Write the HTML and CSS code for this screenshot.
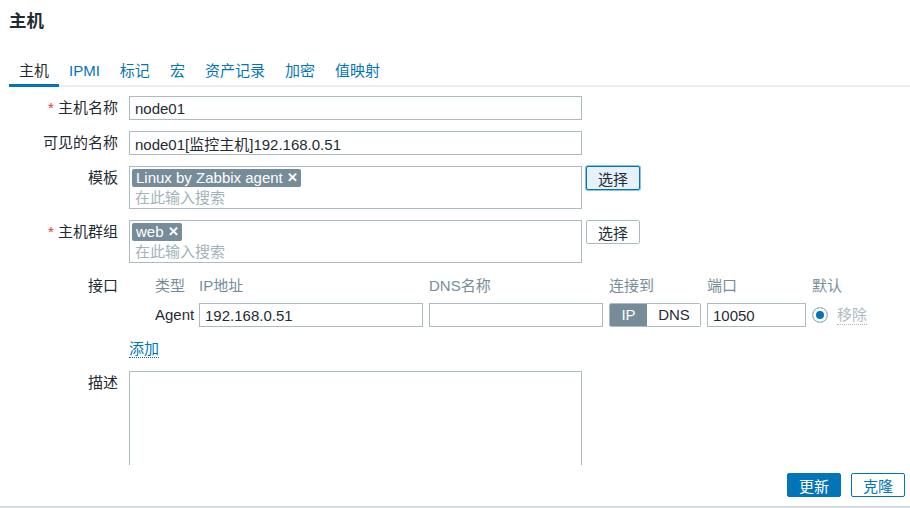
FILE: index.html
```html
<!DOCTYPE html>
<html lang="zh">
<head>
<meta charset="utf-8">
<title>主机</title>
<link rel="stylesheet" href="styles.css">
</head>
<body>
<div class="page">
  <header class="page-header">
    <h1 class="title">主机</h1>
  </header>
  <nav class="tabs">
    <a class="tab active">主机</a>
    <a class="tab">IPMI</a>
    <a class="tab">标记</a>
    <a class="tab">宏</a>
    <a class="tab">资产记录</a>
    <a class="tab">加密</a>
    <a class="tab">值映射</a>
  </nav>
  <main class="content">
    <div class="form-grid">
      <label class="lbl"><span class="req">*</span> 主机名称</label>
      <div class="field"><input class="text-input wide" type="text" value="node01"></div>

      <label class="lbl">可见的名称</label>
      <div class="field"><input class="text-input wide" type="text" value="node01[监控主机]192.168.0.51"></div>

      <label class="lbl">模板</label>
      <div class="field row">
        <div class="multiselect">
          <div class="tags"><span class="tag">Linux by Zabbix agent<span class="tag-x">✕</span></span></div>
          <div class="ms-placeholder">在此输入搜索</div>
        </div>
        <button class="btn-grey focused">选择</button>
      </div>

      <label class="lbl"><span class="req">*</span> 主机群组</label>
      <div class="field row">
        <div class="multiselect">
          <div class="tags"><span class="tag">web<span class="tag-x">✕</span></span></div>
          <div class="ms-placeholder">在此输入搜索</div>
        </div>
        <button class="btn-grey">选择</button>
      </div>

      <label class="lbl">接口</label>
      <div class="field">
        <div class="iface">
          <div class="ih">类型</div>
          <div class="ih">IP地址</div>
          <div class="ih">DNS名称</div>
          <div class="ih">连接到</div>
          <div class="ih">端口</div>
          <div class="ih">默认</div>

          <div class="itype">Agent</div>
          <input class="text-input" type="text" value="192.168.0.51">
          <input class="text-input" type="text" value="">
          <div class="toggle"><span class="seg on">IP</span><span class="seg">DNS</span></div>
          <input class="text-input" type="text" value="10050">
          <div class="def"><span class="radio"></span><span class="remove">移除</span></div>
        </div>
      </div>

      <div class="lbl empty"></div>
      <div class="field add-row"><a class="link">添加</a></div>

      <label class="lbl">描述</label>
      <div class="field"><textarea class="textarea"></textarea></div>
    </div>
  </main>
  <footer class="footer">
    <button class="btn-primary">更新</button>
    <button class="btn-alt">克隆</button>
  </footer>
</div>
</body>
</html>
```

FILE: styles.css
```css
* { box-sizing: border-box; }

html, body {
  margin: 0;
  padding: 0;
  background: #ffffff;
}

body {
  font-family: "Liberation Sans", Arial, "Noto Sans CJK SC", sans-serif;
  font-size: 15px;
  color: #1f2c33;
}

.page {
  height: 508px;
  display: flex;
  flex-direction: column;
  overflow: hidden;
  border-bottom: 2px solid #d5dce0;
}

.page-header {
  padding: 10px 9px 0;
}

.title {
  margin: 0;
  font-size: 17.5px;
  line-height: 22px;
  font-weight: bold;
  color: #1f2c33;
}

.tabs {
  display: flex;
  margin: 24px 0 0 9px;
  border-bottom: 2px solid #ebeef0;
}

.tab {
  display: block;
  padding: 5px 10px 3px;
  line-height: 20px;
  color: #0275b8;
  border-bottom: 3px solid transparent;
  margin-bottom: -2px;
  cursor: pointer;
}

.tab.active {
  color: #1f2c33;
  border-bottom-color: #0275b8;
}

.content {
  flex: 0 0 378px;
  height: 378px;
  overflow: hidden;
  padding-top: 9px;
}

.form-grid {
  display: grid;
  grid-template-columns: 118px 1fr;
  column-gap: 11px;
  row-gap: 11px;
  align-items: start;
}

.lbl {
  text-align: right;
  line-height: 24px;
  white-space: nowrap;
}

.req {
  color: #e33734;
}

.field.row {
  display: flex;
  align-items: flex-start;
  gap: 4px;
}

.text-input {
  font: inherit;
  color: #1f2c33;
  height: 24px;
  border: 1px solid #acbbc2;
  border-radius: 0;
  padding: 0 5px;
  margin: 0;
  background: #fff;
  outline: none;
  width: 100%;
}

.text-input.wide {
  width: 453px;
}

.multiselect {
  width: 453px;
  height: 43px;
  border: 1px solid #acbbc2;
  padding: 2px 2px 1px;
  background: #fff;
}

.tags {
  display: flex;
  height: 18px;
  margin-bottom: 2px;
}

.tag {
  display: inline-flex;
  align-items: center;
  height: 18px;
  line-height: 18px;
  background: #768d99;
  color: #ffffff;
  border-radius: 2px;
  padding: 0 3px 0 4px;
  white-space: nowrap;
}

.tag-x {
  font-size: 13px;
  font-weight: bold;
  margin-left: 4px;
}

.ms-placeholder {
  line-height: 18px;
  height: 18px;
  padding-left: 3px;
  color: #a4b2b9;
}

.btn-grey {
  font: inherit;
  height: 24px;
  width: 54px;
  padding: 0;
  background: #ffffff;
  color: #1f2c33;
  border: 1px solid #acbbc2;
  border-radius: 2px;
  cursor: pointer;
}

.btn-grey.focused {
  background: #e6f1fb;
  border-color: #0275b8;
  box-shadow: 0 0 0 1px rgba(2, 117, 184, 0.45);
}

.iface {
  display: grid;
  grid-template-columns: 38px 224px 174px 92px 99px auto;
  column-gap: 6px;
  row-gap: 5px;
  padding-left: 26px;
  align-items: center;
}

.ih {
  line-height: 24px;
  color: #768d99;
  white-space: nowrap;
}

.itype {
  line-height: 24px;
  white-space: nowrap;
}

.toggle {
  display: flex;
  height: 24px;
  border: 1px solid #acbbc2;
  border-radius: 2px;
  overflow: hidden;
}

.seg {
  line-height: 22px;
  text-align: center;
  flex: 0 0 54px;
  color: #1f2c33;
}

.seg.on {
  flex: 0 0 37px;
  background: #768d99;
  color: #ffffff;
}

.def {
  display: flex;
  align-items: center;
  gap: 9px;
}

.radio {
  display: inline-block;
  width: 16px;
  height: 16px;
  border-radius: 50%;
  border: 1px solid #acbbc2;
  background: #0275b8;
  box-shadow: inset 0 0 0 3px #ffffff;
}

.remove {
  color: #acbbc2;
  line-height: 18px;
  border-bottom: 1px dotted #acbbc2;
}

.add-row {
  line-height: 22px;
  height: 22px;
}

.link {
  color: #0275b8;
  border-bottom: 1px dotted #0275b8;
  cursor: pointer;
}

.lbl.empty {
  height: 22px;
}

.textarea {
  display: block;
  font: inherit;
  width: 453px;
  height: 140px;
  border: 1px solid #acbbc2;
  margin: 0;
  padding: 0 5px;
  resize: none;
  outline: none;
}

.footer {
  flex: 1;
  display: flex;
  justify-content: flex-end;
  align-items: flex-start;
  gap: 10px;
  padding: 8px 5px 0 0;
}

.btn-primary,
.btn-alt {
  font: inherit;
  width: 54px;
  height: 24px;
  padding: 0;
  border-radius: 2px;
  border: 1px solid #0275b8;
  cursor: pointer;
}

.btn-primary {
  background: #0275b8;
  color: #ffffff;
}

.btn-alt {
  background: #ffffff;
  color: #0275b8;
}
```
